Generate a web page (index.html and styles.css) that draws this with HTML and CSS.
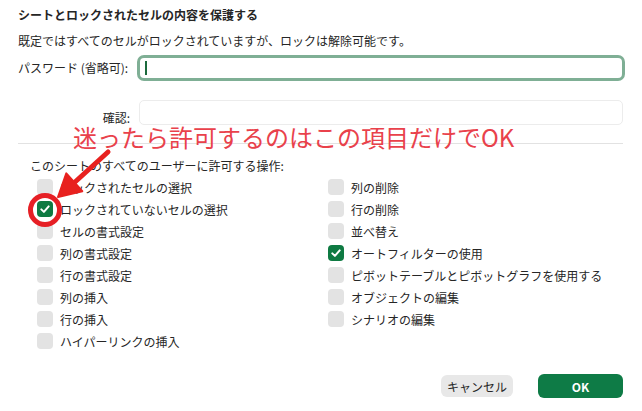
FILE: index.html
```html
<!DOCTYPE html>
<html lang="ja">
<head>
<meta charset="utf-8">
<link rel="stylesheet" href="styles.css">
</head>
<body>
<div class="dialog">
  <div class="content">
    <h1 class="title">シートとロックされたセルの内容を保護する</h1>
    <p class="desc">既定ではすべてのセルがロックされていますが、ロックは解除可能です。</p>
    <div class="field">
      <label class="flabel">パスワード (省略可):</label>
      <div class="input focus"><span class="caret"></span></div>
    </div>
    <div class="field confirm">
      <label class="flabel">確認:</label>
      <div class="input"></div>
    </div>
    <div class="sep"></div>
    <p class="section">このシートのすべてのユーザーに許可する操作:</p>
    <div class="options">
      <div class="col">
        <div class="opt"><span class="box"></span>ロックされたセルの選択</div>
        <div class="opt"><span class="box on"><svg viewBox="0 0 16 16"><path d="M4.3 8.4 L6.9 10.9 L11.7 5.4"/></svg></span>ロックされていないセルの選択</div>
        <div class="opt"><span class="box"></span>セルの書式設定</div>
        <div class="opt"><span class="box"></span>列の書式設定</div>
        <div class="opt"><span class="box"></span>行の書式設定</div>
        <div class="opt"><span class="box"></span>列の挿入</div>
        <div class="opt"><span class="box"></span>行の挿入</div>
        <div class="opt"><span class="box"></span>ハイパーリンクの挿入</div>
      </div>
      <div class="col">
        <div class="opt"><span class="box"></span>列の削除</div>
        <div class="opt"><span class="box"></span>行の削除</div>
        <div class="opt"><span class="box"></span>並べ替え</div>
        <div class="opt"><span class="box on"><svg viewBox="0 0 16 16"><path d="M4.3 8.4 L6.9 10.9 L11.7 5.4"/></svg></span>オートフィルターの使用</div>
        <div class="opt"><span class="box"></span>ピボットテーブルとピボットグラフを使用する</div>
        <div class="opt"><span class="box"></span>オブジェクトの編集</div>
        <div class="opt"><span class="box"></span>シナリオの編集</div>
      </div>
    </div>
    <div class="buttons">
      <button class="btn cancel">キャンセル</button>
      <button class="btn ok">OK</button>
    </div>
    <div class="note">迷ったら許可するのはこの項目だけでOK</div>
    <svg class="annot" width="642" height="411" viewBox="0 0 642 411">
      <line x1="108" y1="152" x2="75" y2="182" stroke="#e8211f" stroke-width="5" stroke-linecap="round"/>
      <polygon points="58,197 66.3,173.4 82.3,191.2" fill="#e8211f" stroke="#e8211f" stroke-width="2" stroke-linejoin="round"/>
      <circle cx="45" cy="210" r="14.5" fill="none" stroke="#e61f25" stroke-width="5"/>
    </svg>
  </div>
</div>
</body>
</html>
```

FILE: styles.css
```css
html, body {
  margin: 0;
  padding: 0;
}
body {
  background: #8f8f8f;
  width: 642px;
  height: 411px;
  overflow: hidden;
  font-family: "Noto Sans CJK JP", "Noto Sans", sans-serif;
  color: #262626;
}
.dialog {
  margin: -6px;
  padding: 6px;
  width: 642px;
  height: 411px;
  background: #ffffff;
  border-radius: 18px;
}
.content {
  position: relative;
  width: 642px;
  height: 411px;
  box-sizing: border-box;
  padding: 6px 19px 0 18px;
}
.title {
  margin: 0;
  font-size: 12px;
  line-height: 18px;
  font-weight: 700;
}
.desc {
  margin: 8px 0 0;
  font-size: 12px;
  line-height: 18px;
}
.field {
  display: flex;
  align-items: center;
  margin-top: 5px;
}
.flabel {
  width: 119px;
  flex: none;
  font-size: 12px;
  line-height: 18px;
}
.input {
  box-sizing: border-box;
  height: 26px;
  flex: none;
}
.input.focus {
  width: 488px;
  margin-right: -2px;
  border: 3px solid #7faf95;
  border-radius: 7px;
  display: flex;
  align-items: center;
  padding-left: 5px;
}
.caret {
  width: 2px;
  height: 14px;
  background: #1b6a3d;
}
.confirm {
  margin-top: 19px;
}
.confirm .flabel {
  width: 121px;
  box-sizing: border-box;
  text-align: right;
  padding-right: 9px;
  align-self: flex-end;
  line-height: 15px;
}
.confirm .input {
  width: 484px;
  height: 25px;
  border: 1px solid #ececec;
  border-radius: 5px;
}
.sep {
  margin-top: 18px;
  height: 1px;
  background: #e2e2e2;
}
.section {
  margin: 13px 0 0;
  padding-left: 12px;
  font-size: 12px;
  line-height: 18px;
}
.options {
  display: grid;
  grid-template-columns: 291px 1fr;
  margin-top: 1px;
  padding-left: 19px;
}
.opt {
  display: flex;
  align-items: center;
  gap: 7px;
  height: 22px;
  font-size: 12px;
}
.box {
  width: 16px;
  height: 16px;
  border-radius: 4px;
  background: #e3e3e3;
  flex: none;
  display: flex;
}
.box.on {
  background: #0e7a42;
}
.box svg {
  width: 16px;
  height: 16px;
}
.box path {
  fill: none;
  stroke: #ffffff;
  stroke-width: 2;
  stroke-linecap: round;
  stroke-linejoin: round;
}
.buttons {
  display: flex;
  justify-content: flex-end;
  align-items: center;
  gap: 25px;
  margin-top: 22px;
}
.btn {
  font-family: "Noto Sans CJK JP", "Noto Sans", sans-serif;
  font-size: 12px;
  border: none;
  padding: 0;
}
.cancel {
  width: 72px;
  height: 22px;
  background: #e8e8e8;
  color: #262626;
  border-radius: 6px;
}
.ok {
  width: 85px;
  height: 24px;
  background: #0e7b46;
  color: #ffffff;
  font-weight: 700;
  border-radius: 6px;
}
.note {
  position: absolute;
  left: 73px;
  top: 126px;
  font-size: 24px;
  line-height: 22px;
  color: #e9414b;
  white-space: nowrap;
}
.annot {
  position: absolute;
  left: 0;
  top: 0;
  pointer-events: none;
}
```
